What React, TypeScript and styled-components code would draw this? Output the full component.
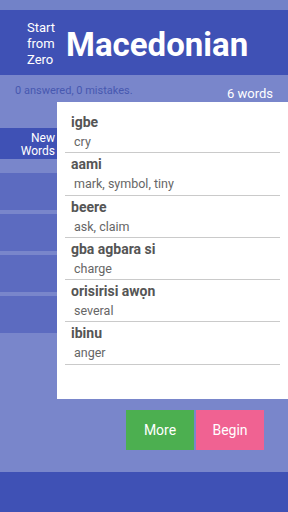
import React from "react";
import styled, { createGlobalStyle } from "styled-components";

const GlobalStyle = createGlobalStyle`
  html, body {
    margin: 0;
    padding: 0;
    background: #7986cb;
  }
  * { box-sizing: border-box; }
`;

const words = [
  { word: "igbe", meaning: "cry" },
  { word: "aami", meaning: "mark, symbol, tiny" },
  { word: "beere", meaning: "ask, claim" },
  { word: "gba agbara si", meaning: "charge" },
  { word: "orisirisi awọn", meaning: "several" },
  { word: "ibinu", meaning: "anger" },
];

const Screen = styled.div`
  width: 288px;
  height: 512px;
  display: flex;
  flex-direction: column;
  background: #7986cb;
  font-family: Roboto, "Liberation Sans", sans-serif;
  overflow: hidden;
`;

const TopStrip = styled.div`
  height: 10px;
  background: #7282c8;
`;

const Header = styled.div`
  height: 65px;
  background: #3f51b5;
  display: flex;
  align-items: center;
  padding-left: 27px;
  gap: 10px;
`;

const Tagline = styled.div`
  color: #fff;
  font-size: 13px;
  line-height: 16px;
  width: 30px;
  margin-top: 3px;
`;

const Title = styled.div`
  color: #fff;
  font-size: 33px;
  font-weight: 700;
  margin-top: 4px;
  margin-left: -1px;
`;

const StatusBar = styled.div`
  height: 27px;
  display: flex;
  justify-content: space-between;
  align-items: flex-end;
  padding: 0 15px 0 15px;
`;

const Progress = styled.span`
  color: #4758b0;
  font-size: 11px;
  margin-bottom: 5px;
`;

const Count = styled.span`
  color: #fff;
  font-size: 13px;
  margin-bottom: 1px;
`;

const Content = styled.div`
  display: flex;
`;

const Sidebar = styled.div`
  width: 57px;
  padding-top: 26px;
  display: flex;
  flex-direction: column;
  gap: 4px;
`;

const Tab = styled.div<{ $active?: boolean }>`
  height: ${(p) => (p.$active ? "31px" : "37px")};
  margin-bottom: ${(p) => (p.$active ? "10px" : "0")};
  background: ${(p) => (p.$active ? "#3f51b5" : "#5c6bc0")};
  color: #fff;
  font-size: 12px;
  line-height: 13px;
  text-align: right;
  padding: 4px 2px 0 0;
`;

const Card = styled.div`
  flex: 1;
  height: 297px;
  background: #fff;
  padding: 9px 8px 0 8px;
`;

const Row = styled.div`
  height: 42.3px;
  border-bottom: 1.5px solid #cacaca;
  display: flex;
  flex-direction: column;
  padding-top: 2px;
`;

const Word = styled.div`
  color: #555;
  font-size: 14px;
  font-weight: 700;
  padding-left: 6px;
  line-height: 18px;
`;

const Meaning = styled.div`
  color: #666;
  font-size: 12.5px;
  padding-left: 9px;
  margin-top: 3px;
  line-height: 16px;
`;

const Actions = styled.div`
  display: flex;
  justify-content: flex-end;
  gap: 2px;
  padding: 11px 24px 0 0;
`;

const ActionButton = styled.button<{ $color: string }>`
  width: 68px;
  height: 40px;
  border: none;
  background: ${(p) => p.$color};
  color: #fff;
  font-family: Roboto, "Liberation Sans", sans-serif;
  font-size: 14px;
  padding: 0;
`;

const Spacer = styled.div`
  flex: 1;
`;

const Footer = styled.div`
  height: 40px;
  background: #3f51b5;
`;

export default function App() {
  return (
    <>
      <GlobalStyle />
      <Screen>
        <TopStrip />
        <Header>
          <Tagline>Start from Zero</Tagline>
          <Title>Macedonian</Title>
        </Header>
        <StatusBar>
          <Progress>0 answered, 0 mistakes.</Progress>
          <Count>6 words</Count>
        </StatusBar>
        <Content>
          <Sidebar>
            <Tab $active>
              New
              <br />
              Words
            </Tab>
            <Tab />
            <Tab />
            <Tab />
            <Tab />
          </Sidebar>
          <Card>
            {words.map((w) => (
              <Row key={w.word}>
                <Word>{w.word}</Word>
                <Meaning>{w.meaning}</Meaning>
              </Row>
            ))}
          </Card>
        </Content>
        <Actions>
          <ActionButton $color="#4caf50">More</ActionButton>
          <ActionButton $color="#f06292">Begin</ActionButton>
        </Actions>
        <Spacer />
        <Footer />
      </Screen>
    </>
  );
}
